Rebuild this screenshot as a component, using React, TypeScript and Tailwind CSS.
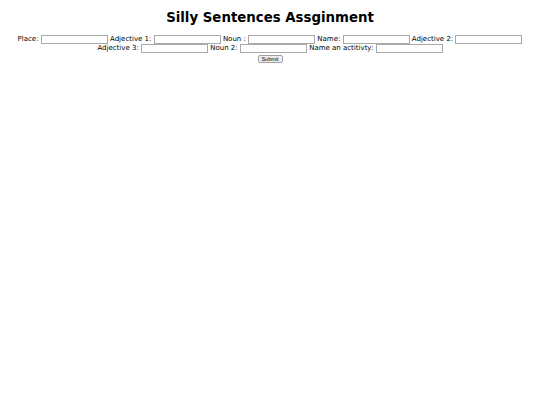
import React from "react";

const Field = ({ label }: { label: string }) => (
  <>
    <span>{label}</span>{" "}
    <input
      type="text"
      className="inline-block h-[9px] w-[67px] border border-[#a9a9a9] bg-white align-middle text-[6px]"
    />{" "}
  </>
);

export default function App() {
  return (
    <div className="min-h-[405px] bg-white text-black" style={{ fontFamily: '"DejaVu Sans", Verdana, sans-serif' }}>
      <h1 className="pt-[9.5px] text-center text-[13.33px] font-bold leading-[16px]">Silly Sentences Assginment</h1>
      <div className="mt-[9px] px-[6px] text-center text-[7px] leading-[9.5px]">
        <Field label="Place:" />
        <Field label="Adjective 1:" />
        <Field label="Noun :" />
        <Field label="Name:" />
        <Field label="Adjective 2:" />
        <br />
        <Field label="Adjective 3:" />
        <Field label="Noun 2:" />
        <Field label="Name an actitivty:" />
        <br />
        <button className="mt-[0.5px] h-[8.5px] w-[25px] rounded-[2px] border border-[#a0a0a0] bg-[#efefef] align-middle text-[5.5px] leading-[6px]" style={{ fontFamily: '"Liberation Sans", Arial, sans-serif' }}>
          Submit
        </button>
      </div>
    </div>
  );
}
